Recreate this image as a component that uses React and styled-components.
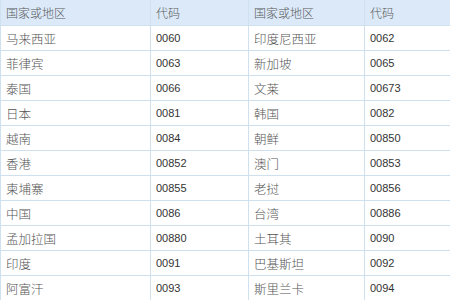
import styled, { createGlobalStyle } from 'styled-components';

const GlobalStyle = createGlobalStyle`
  html, body {
    margin: 0;
    padding: 0;
    background: #ffffff;
    overflow: hidden;
  }
`;

const rows = [
  ['马来西亚', '0060', '印度尼西亚', '0062'],
  ['菲律宾', '0063', '新加坡', '0065'],
  ['泰国', '0066', '文莱', '00673'],
  ['日本', '0081', '韩国', '0082'],
  ['越南', '0084', '朝鲜', '00850'],
  ['香港', '00852', '澳门', '00853'],
  ['柬埔寨', '00855', '老挝', '00856'],
  ['中国', '0086', '台湾', '00886'],
  ['孟加拉国', '00880', '土耳其', '0090'],
  ['印度', '0091', '巴基斯坦', '0092'],
  ['阿富汗', '0093', '斯里兰卡', '0094'],
];

const App = () => {
  return (
    <>
      <GlobalStyle />
      <Table>
        <colgroup>
          <col style={{ width: 150 }} />
          <col style={{ width: 98 }} />
          <col style={{ width: 116 }} />
          <col style={{ width: 86 }} />
        </colgroup>
        <thead>
          <tr>
            <HeadCell>国家或地区</HeadCell>
            <HeadCell>代码</HeadCell>
            <HeadCell>国家或地区</HeadCell>
            <HeadCell $last>代码</HeadCell>
          </tr>
        </thead>
        <tbody>
          {rows.map((row) => (
            <tr key={row[0]}>
              <NameCell>{row[0]}</NameCell>
              <CodeCell>{row[1]}</CodeCell>
              <NameCell>{row[2]}</NameCell>
              <CodeCell $last>{row[3]}</CodeCell>
            </tr>
          ))}
        </tbody>
      </Table>
    </>
  );
};

const Table = styled.table`
  width: 450px;
  table-layout: fixed;
  border-collapse: collapse;
  border-left: 1px solid #cfe0ee;
`;

const Cell = styled.td`
  height: 24px;
  padding: 0 0 0 5px;
  border-bottom: 1px solid #cfe0ee;
  border-right: ${(p) => (p.$last ? 'none' : '1px solid #cfe0ee')};
  color: #555;
  vertical-align: middle;
  white-space: nowrap;
  overflow: hidden;
`;

const HeadCell = styled(Cell).attrs({ as: 'th' })`
  height: 25px;
  background: #dbe9f8;
  font-family: 'Noto Sans CJK SC', 'Noto Sans', sans-serif;
  font-size: 12px;
  font-weight: 300;
  text-align: left;
  color: #5a5a5a;
`;

const NameCell = styled(Cell)`
  font-family: 'Noto Sans CJK SC', 'Noto Sans', sans-serif;
  font-size: 12.5px;
  font-weight: 300;
`;

const CodeCell = styled(Cell)`
  font-family: 'Liberation Sans', Arial, sans-serif;
  font-size: 11px;
  color: #333;
`;

export default App;
